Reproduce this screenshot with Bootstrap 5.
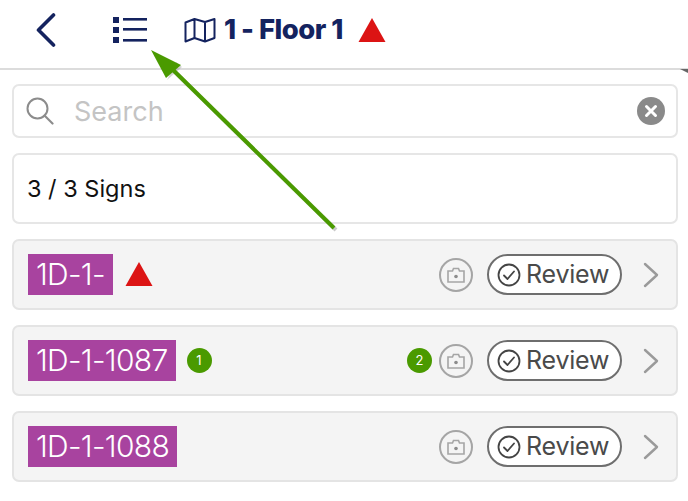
<!DOCTYPE html>
<html lang="en">
<head>
<meta charset="utf-8">
<title>Signs</title>
<link rel="stylesheet" href="https://cdn.jsdelivr.net/npm/bootstrap@5.3.0/dist/css/bootstrap.min.css">
<style>
html,body{height:501px;overflow:hidden;background:#fff}
body{font-family:Inter,"Liberation Sans",sans-serif;position:relative;width:688px}
.top-bar{height:70px;border-bottom:2px solid #dcdcdc;padding:0 0 8px 35px;color:#14235f}
.back-slot{width:78px}
.list-slot{width:71px}
.floor-title{font-size:27.5px;font-weight:800;letter-spacing:-.55px;margin-left:8px;margin-right:15px;line-height:1}
.content-pane{padding:14px 10px 0 12px;gap:15px}
.search-box{height:54px;border:2px solid #e6e6e6;border-radius:7px;padding:0 11px 0 12px}
.search-text{font-size:27px;color:#c4c4c4;margin-left:20px;line-height:1}
.count-box{height:71px;border:2px solid #e6e6e6;border-radius:7px;padding-left:13px;font-size:23.5px;color:#111}
.sign-row{height:71px;border:2px solid #e4e4e4;border-radius:7px;background:#f4f4f4;padding:0 17px 0 14px}
.sign-tag{background:#a8439f;color:#fff;font-size:30px;font-weight:300;height:41px;line-height:41px;padding:0 8px;letter-spacing:-.7px}
.warn-mark{margin-left:12px}
.first-dot{margin-left:11px}
.num-dot{width:25px;height:25px;border-radius:50%;background:#4a9a00;color:#fff;font-size:13px;line-height:25px;text-align:center}
.second-dot{margin-right:7px}
.cam-ring{width:34px;height:34px;border:2px solid #a5a5a5;border-radius:50%}
.review-pill{width:135px;height:41px;border:2px solid #6e6e6e;border-radius:21px;background:#fff;color:#4a4a4a;font-size:25px;padding-left:8px;gap:5px;margin-left:14px;margin-right:21px;line-height:1;letter-spacing:-.2px}
.pointer-arrow{position:absolute;left:0;top:0;pointer-events:none}
</style>
</head>
<body>
<header class="top-bar d-flex align-items-center">
  <div class="back-slot d-flex">
    <svg width="22" height="34" viewBox="0 0 22 34"><path d="M18.500 2 L3.500 17 L18.500 32" fill="none" stroke="#14235f" stroke-width="3.600" stroke-linecap="round" stroke-linejoin="round"/></svg>
  </div>
  <div class="list-slot d-flex">
    <svg width="34" height="28" viewBox="0 0 34 28"><g fill="#14235f"><rect x="0" y="1" width="6" height="6"/><rect x="0" y="11" width="6" height="6"/><rect x="0" y="21" width="6" height="6"/><rect x="10" y="2" width="24" height="2.6"/><rect x="10" y="12" width="24" height="2.6"/><rect x="10" y="23" width="24" height="2.6"/></g></svg>
  </div>
  <svg width="32" height="26" viewBox="0 0 32 26"><path d="M1.500 5.500 L10.500 2 L21 5 L30.500 2 V21 L21 24.500 L10.500 21 L1.500 24.500 Z M10.500 2 V21 M21 5 V24.500" fill="none" stroke="#14235f" stroke-width="2" stroke-linejoin="round"/></svg>
  <span class="floor-title">1 - Floor 1</span>
  <svg width="28" height="25" viewBox="0 0 28 25"><path d="M14 0 L27.500 24 H.5 Z" fill="#dc1414"/></svg>
</header>

<main class="content-pane d-flex flex-column">
  <div class="search-box d-flex align-items-center">
    <svg width="28" height="28" viewBox="0 0 28 28"><circle cx="11.500" cy="11.500" r="10" fill="none" stroke="#8c8c8c" stroke-width="2"/><path d="M18.500 18.500 L26.500 26.500" stroke="#8c8c8c" stroke-width="2.200" stroke-linecap="round"/></svg>
    <span class="search-text flex-grow-1">Search</span>
    <svg width="28" height="28" viewBox="0 0 28 28"><circle cx="14" cy="14" r="14" fill="#8a8a8a"/><path d="M9.500 9.500 L18.500 18.500 M18.500 9.500 L9.500 18.500" stroke="#fff" stroke-width="3" stroke-linecap="round"/></svg>
  </div>

  <div class="count-box d-flex align-items-center">3 / 3 Signs</div>

  <div class="sign-row d-flex align-items-center">
    <span class="sign-tag">1D-1-</span>
    <svg class="warn-mark" width="28" height="25" viewBox="0 0 28 25"><path d="M14 0 L27.500 24 H.5 Z" fill="#dc1414"/></svg>
    <span class="ms-auto cam-ring d-flex align-items-center justify-content-center">
      <svg width="18" height="16" viewBox="0 0 18 16"><path d="M1 4 H5.500 L6.500 1.500 H11.500 L12.500 4 H17 V15 H1 Z" fill="none" stroke="#a5a5a5" stroke-width="1.600"/><circle cx="9" cy="9.500" r="1.800" fill="#8c8c8c"/></svg>
    </span>
    <span class="review-pill d-flex align-items-center">
      <svg width="24" height="24" viewBox="0 0 24 24"><circle cx="12" cy="12" r="10.500" fill="none" stroke="#444" stroke-width="1.800"/><path d="M7 12.500 L10.500 16 L17 8.500" fill="none" stroke="#444" stroke-width="1.800" stroke-linecap="round" stroke-linejoin="round"/></svg>
      Review
    </span>
    <svg width="16" height="26" viewBox="0 0 16 26"><path d="M2 2 L14 13 L2 24" fill="none" stroke="#9a9a9a" stroke-width="2.400" stroke-linecap="round" stroke-linejoin="round"/></svg>
  </div>

  <div class="sign-row d-flex align-items-center">
    <span class="sign-tag">1D-1-1087</span>
    <span class="num-dot first-dot flex-shrink-0">1</span>
    <span class="num-dot second-dot ms-auto">2</span>
    <span class="cam-ring d-flex align-items-center justify-content-center">
      <svg width="18" height="16" viewBox="0 0 18 16"><path d="M1 4 H5.500 L6.500 1.500 H11.500 L12.500 4 H17 V15 H1 Z" fill="none" stroke="#a5a5a5" stroke-width="1.600"/><circle cx="9" cy="9.500" r="1.800" fill="#8c8c8c"/></svg>
    </span>
    <span class="review-pill d-flex align-items-center">
      <svg width="24" height="24" viewBox="0 0 24 24"><circle cx="12" cy="12" r="10.500" fill="none" stroke="#444" stroke-width="1.800"/><path d="M7 12.500 L10.500 16 L17 8.500" fill="none" stroke="#444" stroke-width="1.800" stroke-linecap="round" stroke-linejoin="round"/></svg>
      Review
    </span>
    <svg width="16" height="26" viewBox="0 0 16 26"><path d="M2 2 L14 13 L2 24" fill="none" stroke="#9a9a9a" stroke-width="2.400" stroke-linecap="round" stroke-linejoin="round"/></svg>
  </div>

  <div class="sign-row d-flex align-items-center">
    <span class="sign-tag">1D-1-1088</span>
    <span class="ms-auto cam-ring d-flex align-items-center justify-content-center">
      <svg width="18" height="16" viewBox="0 0 18 16"><path d="M1 4 H5.500 L6.500 1.500 H11.500 L12.500 4 H17 V15 H1 Z" fill="none" stroke="#a5a5a5" stroke-width="1.600"/><circle cx="9" cy="9.500" r="1.800" fill="#8c8c8c"/></svg>
    </span>
    <span class="review-pill d-flex align-items-center">
      <svg width="24" height="24" viewBox="0 0 24 24"><circle cx="12" cy="12" r="10.500" fill="none" stroke="#444" stroke-width="1.800"/><path d="M7 12.500 L10.500 16 L17 8.500" fill="none" stroke="#444" stroke-width="1.800" stroke-linecap="round" stroke-linejoin="round"/></svg>
      Review
    </span>
    <svg width="16" height="26" viewBox="0 0 16 26"><path d="M2 2 L14 13 L2 24" fill="none" stroke="#9a9a9a" stroke-width="2.400" stroke-linecap="round" stroke-linejoin="round"/></svg>
  </div>
</main>

<svg class="pointer-arrow" width="688" height="501" viewBox="0 0 688 501">
  <path d="M336 230 L172 69" stroke="#8a8a8a" stroke-opacity=".45" stroke-width="4" fill="none"/>
  <path d="M167 80 L182 67 L176 62 Z" fill="#8a8a8a" fill-opacity=".35"/>
  <path d="M334 228 L170 67" stroke="#4a9a00" stroke-width="4" fill="none"/>
  <path d="M151 50 L181 65 L166 78 Z" fill="#4a9a00"/>
  <path d="M680 69 H688 V73 Z" fill="#666"/>
</svg>
</body>
</html>
